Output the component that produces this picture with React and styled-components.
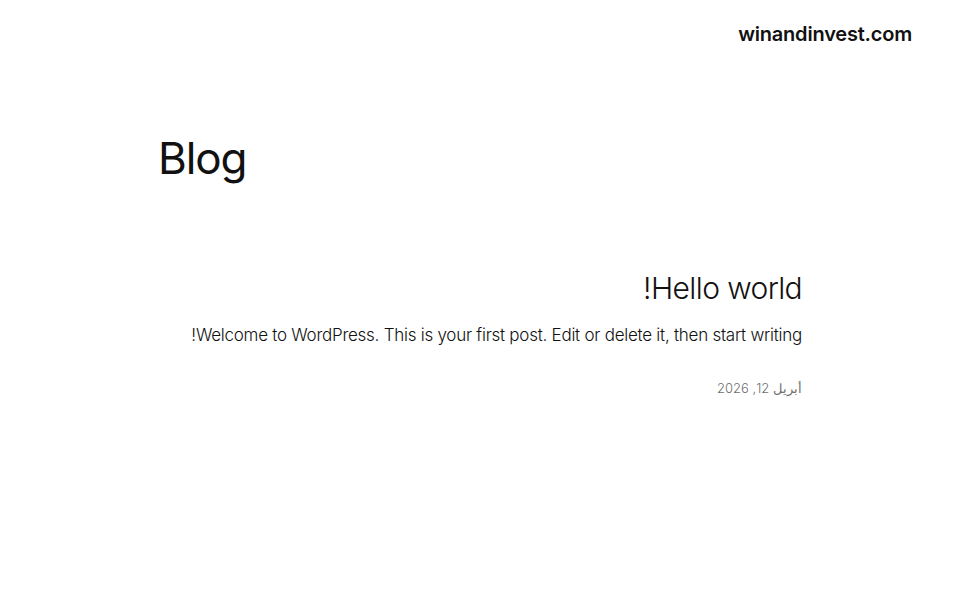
import React from 'react';
import styled, { createGlobalStyle } from 'styled-components';

const GlobalStyle = createGlobalStyle`
  html, body {
    margin: 0;
    padding: 0;
    background: #ffffff;
  }
  body {
    direction: rtl;
    font-family: Inter, "Noto Sans", sans-serif;
    color: #111111;
    -webkit-font-smoothing: antialiased;
  }
`;

const Header = styled.header`
  display: flex;
  justify-content: flex-start;
  align-items: center;
  padding: 20px 48px 0;
  height: 27px;
`;

const SiteTitle = styled.a`
  font-size: 20px;
  font-weight: 600;
  letter-spacing: -0.01em;
  color: #111111;
  text-decoration: none;
`;

const Main = styled.main`
  width: 644px;
  margin: 0 auto;
  display: flex;
  flex-direction: column;
`;

const PageTitle = styled.h1`
  margin: 86px 0 0;
  font-size: 44px;
  font-weight: 400;
  line-height: 1.15;
  letter-spacing: -0.025em;
  text-align: left;
`;

const Post = styled.article`
  display: flex;
  flex-direction: column;
  margin-top: 86px;
`;

const PostTitle = styled.h2`
  margin: 0;
  font-size: 30px;
  font-weight: 300;
  line-height: 1.2;
  letter-spacing: -0.02em;
`;

const Excerpt = styled.p`
  margin: 17px 0 0;
  font-size: 17px;
  font-weight: 300;
  line-height: 1.5;
  letter-spacing: -0.015em;
`;

const PostDate = styled.time`
  margin-top: 31px;
  font-size: 13px;
  font-weight: 300;
  color: #6e6e6e;
  line-height: 1.4;
`;

export default function App() {
  return (
    <>
      <GlobalStyle />
      <Header>
        <SiteTitle href="#">winandinvest.com</SiteTitle>
      </Header>
      <Main>
        <PageTitle>Blog</PageTitle>
        <Post>
          <PostTitle>Hello world!</PostTitle>
          <Excerpt>
            Welcome to WordPress. This is your first post. Edit or delete it, then start writing!
          </Excerpt>
          <PostDate>أبريل 12, 2026</PostDate>
        </Post>
      </Main>
    </>
  );
}
